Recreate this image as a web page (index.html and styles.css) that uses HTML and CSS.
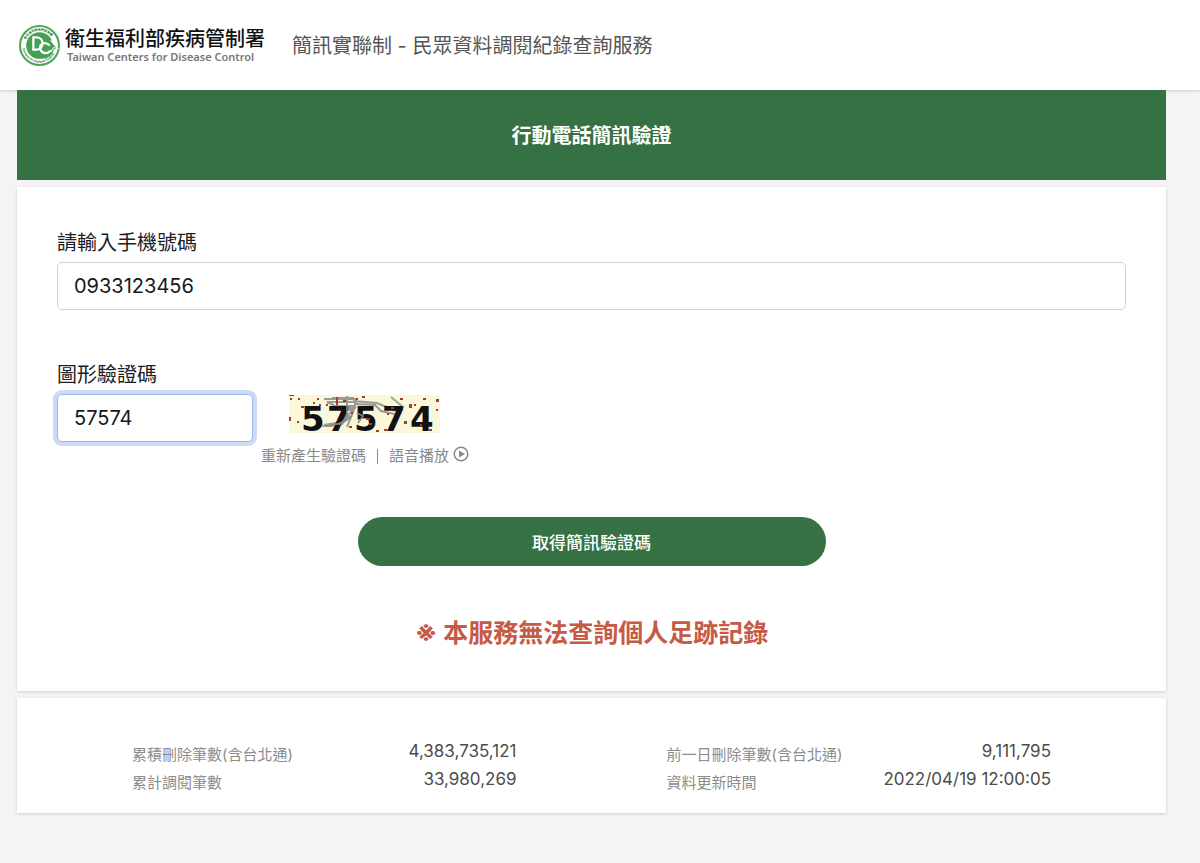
FILE: index.html
```html
<!DOCTYPE html>
<html lang="zh-Hant">
<head>
<meta charset="utf-8">
<meta name="viewport" content="width=device-width, initial-scale=1">
<title>簡訊實聯制 - 民眾資料調閱紀錄查詢服務</title>
<link rel="stylesheet" href="styles.css">
</head>
<body>
<header class="site-header">
  <a class="brand" href="#">
    <svg class="brand-mark" viewBox="0 0 40 40" aria-hidden="true">
      <defs>
        <path id="ring-top" d="M5.5 20a14.5 14.5 0 0 1 29 0"/>
        <path id="ring-bottom" d="M3.3 20a16.7 16.7 0 0 0 33.4 0"/>
      </defs>
      <circle cx="20" cy="20" r="19" fill="#fff" stroke="#4da556" stroke-width="2"/>
      <circle cx="20" cy="20" r="13" fill="#45a052"/>
      <path d="M28 14l10 9-4 1c-1 5-5 8-9 9l-4-4z" fill="#45a052"/>
      <path d="M31 15l7 8-4-1-3 4" fill="none" stroke="#fff" stroke-width="1"/>
      <path d="M14 12h3c8 0 8 12 0 12h-3zM30 20c-5-5-11-1-9 4 2 5 7 4 10 1" fill="none" stroke="#fff" stroke-width="2.200"/>
      <text class="ring-text"><textPath href="#ring-top" startOffset="6">衛生福利部疾病管制署</textPath></text>
      <text class="ring-text"><textPath href="#ring-bottom" startOffset="3">Centers for Disease Control</textPath></text>
    </svg>
    <span class="brand-text">
      <span class="brand-name">衛生福利部疾病管制署</span>
      <span class="brand-sub">Taiwan Centers for Disease Control</span>
    </span>
  </a>
  <h1 class="site-title">簡訊實聯制 - 民眾資料調閱紀錄查詢服務</h1>
</header>

<main class="page">
  <h2 class="banner">行動電話簡訊驗證</h2>

  <form class="card verify">
    <div class="field">
      <label for="phone">請輸入手機號碼</label>
      <input class="input" id="phone" type="tel" value="0933123456">
    </div>
    <div class="captcha-row">
      <div class="field captcha-field">
        <label for="captcha">圖形驗證碼</label>
        <input class="input input-focused" id="captcha" type="text" value="57574">
      </div>
      <div class="captcha-side">
        <svg class="captcha-image" viewBox="0 0 151 38" role="img" aria-label="57574">
          <rect width="151" height="38" fill="#fbf7d9"/>
          <g fill="none" stroke="#999" stroke-width="2">
            <path d="M35 4h32v3H38l8 4h20V7M43 3h22M40 13h25M58 1v18l-8 8-8 4h-8M64 6l24 2 19 8M67 9l19 1 6 6 18 4M66 12l-8 20M52 17l13-3-12 13-18 3"/>
            <path d="M102 2l12 10-8 8M61 20l-8 9-20 2" stroke="#a5a59a"/>
          </g>
          <text class="captcha-digits" x="12 38 65 93 121" y="36">57574</text>
          <path d="M36 31q18-1 27-10M58 10v12l-8 8M68 18l6 3-5 7" fill="none" stroke="#888" stroke-width="1.500"/>
          <path fill="#a83b35" d="M0 0h5v1H0zM1 3h2v2H1zM9 3h2v2H9zM28 3h2v2h-2zM24 7h2v2h-2zM12 11h3v2h-3zM30 9h2v2h-2zM0 22h2v4H0zM8 26h2v2H8zM37 9h2v2h-2zM47 2h2v8h-2zM54 5h3v2h-3zM67 3h2v2h-2zM62 17h2v2h-2zM60 31h3v2h-3zM73 1h3v2h-3zM77 23h4v2h-4zM80 28h3v2h-3zM87 35h3v2h-3zM95 34h3v2h-3zM98 18h2v2h-2zM102 12h3v2h-3zM111 3h3v2h-3zM115 26h3v3h-3zM120 9h3v4h-3zM125 9h2v2h-2zM134 3h3v2h-3zM147 4h3v3h-3zM147 14h2v2h-2zM140 34h3v2h-3zM131 29h2v2h-2z"/>
        </svg>
        <div class="captcha-actions">
          <button class="text-button" type="button">重新產生驗證碼</button>
          <span class="divider"></span>
          <button class="text-button" type="button">語音播放
            <svg class="play-icon" viewBox="0 0 16 16" aria-hidden="true"><circle cx="8" cy="8" r="6.800" fill="none" stroke="currentColor" stroke-width="1.500"/><path d="M6 4.500v7L12 8z" fill="currentColor"/></svg>
          </button>
        </div>
      </div>
    </div>
    <button class="submit" type="button">取得簡訊驗證碼</button>
    <p class="notice"><span class="notice-mark">※</span> 本服務無法查詢個人足跡記錄</p>
  </form>

  <section class="card stats">
    <dl class="stat-list">
      <div class="stat"><dt>累積刪除筆數(含台北通)</dt><dd>4,383,735,121</dd></div>
      <div class="stat"><dt>累計調閱筆數</dt><dd>33,980,269</dd></div>
    </dl>
    <dl class="stat-list">
      <div class="stat"><dt>前一日刪除筆數(含台北通)</dt><dd>9,111,795</dd></div>
      <div class="stat"><dt>資料更新時間</dt><dd>2022/04/19 12:00:05</dd></div>
    </dl>
  </section>
</main>
</body>
</html>
```

FILE: styles.css
```css
* {
  box-sizing: border-box;
}

body {
  margin: 0;
  background: #f4f4f4;
  color: #1c2024;
  font-family: Inter, "Noto Sans CJK TC", sans-serif;
}

button,
input {
  font-family: inherit;
}

.site-header {
  position: relative;
  display: flex;
  align-items: center;
  gap: 27px;
  height: 90px;
  padding: 0 19px;
  background: #fff;
  box-shadow: 0 1px 3px rgba(0, 0, 0, 0.15);
}

.brand {
  display: flex;
  align-items: center;
  gap: 5px;
  color: #111;
  text-decoration: none;
}

.brand-mark {
  width: 41px;
  height: 41px;
}

.ring-text {
  fill: #2f6f3b;
  font-size: 3px;
  font-weight: 700;
}

.brand-text {
  display: flex;
  flex-direction: column;
}

.brand-name {
  font-size: 20px;
  font-weight: 500;
  line-height: 24px;
}

.brand-sub {
  padding-left: 2px;
  color: #777;
  font-family: "Noto Sans", sans-serif;
  font-size: 11px;
  font-weight: 600;
  line-height: 12px;
}

.site-title {
  margin: 0;
  padding-top: 2px;
  color: #555;
  font-size: 20px;
  font-weight: 400;
  line-height: 30px;
}

.page {
  display: flex;
  flex-direction: column;
  gap: 7px;
  padding: 0 34px 50px 17px;
}

.banner {
  position: relative;
  margin: 0;
  padding: 31px 0 29px;
  background: #367143;
  color: #fff;
  font-size: 20px;
  font-weight: 700;
  line-height: 30px;
  text-align: center;
}

.card {
  background: #fff;
  box-shadow: 0 1px 3px rgba(0, 0, 0, 0.16);
}

.verify {
  display: flex;
  flex-direction: column;
  padding: 41px 40px 39px;
}

.field {
  display: flex;
  flex-direction: column;
  gap: 4px;
}

.field label {
  font-size: 20px;
  line-height: 30px;
}

.input {
  width: 100%;
  height: 48px;
  padding: 0 16px;
  border: 1px solid #d0d0d0;
  border-radius: 5px;
  outline: none;
  background: #fff;
  color: #16191c;
  font-size: 20px;
}

.input-focused {
  border-color: #9db8e8;
  box-shadow: 0 0 0 4px #cddaf5;
}

.captcha-row {
  display: flex;
  align-items: flex-end;
  gap: 8px;
  margin-top: 50px;
}

.captcha-field {
  width: 196px;
  margin-bottom: 26px;
}

.captcha-side {
  display: flex;
  flex-direction: column;
  gap: 11px;
}

.captcha-image {
  width: 151px;
  height: 38px;
  margin-left: 28px;
  overflow: visible;
}

.captcha-digits {
  fill: #111;
  font-family: "DejaVu Sans", sans-serif;
  font-size: 34px;
  font-weight: 700;
}

.captcha-actions {
  display: flex;
  align-items: center;
  gap: 11px;
}

.text-button {
  display: flex;
  align-items: center;
  gap: 4px;
  padding: 0;
  border: 0;
  background: none;
  color: #8a8a8a;
  font-size: 15px;
  line-height: 24px;
}

.divider {
  width: 1px;
  height: 15px;
  background: #8a8a8a;
}

.play-icon {
  width: 16px;
  height: 16px;
  margin-bottom: 4px;
}

.submit {
  align-self: center;
  width: 468px;
  max-width: 100%;
  height: 49px;
  margin-top: 49px;
  border: 0;
  border-radius: 25px;
  background: #367143;
  color: #fff;
  font-size: 17px;
  font-weight: 500;
}

.notice {
  margin: 48px 0 0;
  color: #c65a45;
  font-size: 25px;
  font-weight: 700;
  line-height: 38px;
  text-align: center;
}

.notice-mark {
  font-size: 28px;
  line-height: 1;
}

.stats {
  display: grid;
  grid-template-columns: 1fr 1fr;
  gap: 150px;
  padding: 40px 115px 19px;
}

.stat-list {
  margin: 0;
}

.stat {
  display: flex;
  justify-content: space-between;
  height: 28px;
  white-space: nowrap;
}

.stat dt {
  padding-top: 3px;
  color: #8c8c8c;
  font-size: 15px;
  line-height: 27px;
}

.stat dd {
  margin: 0;
  color: #4c4c4c;
  font-size: 17px;
  line-height: 27px;
}
```
